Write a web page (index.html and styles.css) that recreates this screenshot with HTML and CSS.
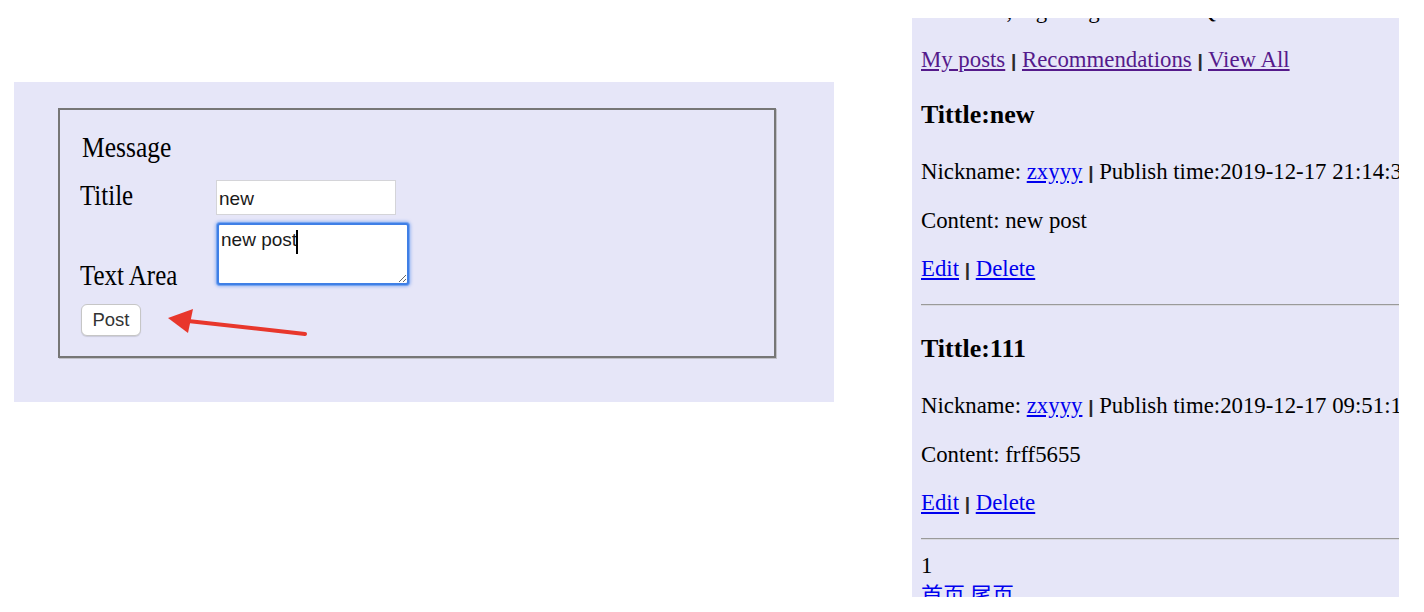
FILE: index.html
```html
<!DOCTYPE html>
<html>
<head>
<meta charset="utf-8">
<title>Blog</title>
<link rel="stylesheet" href="styles.css">
</head>
<body>
<div class="page">
  <section class="left-panel">
    <form class="msg-box">
      <div class="msg-title"><span class="squeeze-a">Message</span></div>
      <div class="row row-title">
        <label class="lbl lbl-title"><span class="squeeze-b">Titile</span></label>
        <input class="txt" type="text" value="new">
      </div>
      <div class="row row-area">
        <label class="lbl lbl-area"><span class="squeeze-b">Text Area</span></label>
        <div class="area-wrap">
          <textarea class="area">new post</textarea>
          <span class="caret"></span>
        </div>
      </div>
      <div class="row row-btn">
        <button type="button" class="post-btn">Post</button>
      </div>
    </form>
    <svg class="arrow" width="820" height="320" viewBox="0 0 820 320">
      <line x1="174" y1="239" x2="291" y2="252" stroke="#e8372c" stroke-width="4" stroke-linecap="round"/>
      <polygon points="154,236 179,227 174,251" fill="#e8372c"/>
    </svg>
  </section>

  <section class="right-panel">
    <div class="cutline">Welcome, big thing here now. Questions are not reviewed till the end.</div>
    <div class="nav"><a class="visited" href="#">My posts</a> <span class="sep">|</span> <a class="visited" href="#">Recommendations</a> <span class="sep">|</span> <a class="visited" href="#">View All</a></div>

    <h3 class="post-title">Tittle:new</h3>
    <div class="meta">Nickname: <a href="#">zxyyy</a> <span class="sep">|</span> Publish time:2019-12-17 21:14:37</div>
    <div class="content">Content: new post</div>
    <div class="actions"><a href="#">Edit</a> <span class="sep">|</span> <a href="#">Delete</a></div>
    <hr class="rule">

    <h3 class="post-title">Tittle:111</h3>
    <div class="meta">Nickname: <a href="#">zxyyy</a> <span class="sep">|</span> Publish time:2019-12-17 09:51:12</div>
    <div class="content">Content: frff5655</div>
    <div class="actions"><a href="#">Edit</a> <span class="sep">|</span> <a href="#">Delete</a></div>
    <hr class="rule">

    <div class="pagenum">1</div>
    <div class="pager"><a href="#">首页</a> <a href="#">尾页</a></div>
  </section>
</div>
</body>
</html>
```

FILE: styles.css
```css
html, body {
  margin: 0;
  padding: 0;
  background: #ffffff;
}
body {
  width: 1424px;
  height: 612px;
  overflow: hidden;
  font-family: "Liberation Serif", "Times New Roman", serif;
  color: #000;
}
.page {
  display: flex;
  align-items: flex-start;
}

/* ---------- left panel ---------- */
.left-panel {
  position: relative;
  box-sizing: border-box;
  width: 820px;
  height: 320px;
  margin-left: 14px;
  margin-top: 82px;
  padding: 26px 0 0 44px;
  background: #e6e6f8;
}
.msg-box {
  box-sizing: border-box;
  width: 718px;
  height: 250px;
  margin: 0;
  border: 2px solid #767676;
  box-shadow: 1px 1px 0 #c0c0c8;
  padding: 0 0 0 20px;
  display: flex;
  flex-direction: column;
  align-items: flex-start;
}
.msg-title {
  margin-top: 22px;
  margin-left: 2px;
  height: 30px;
  line-height: 30px;
  font-size: 29px;
  white-space: nowrap;
}
.squeeze-a {
  display: inline-block;
  transform: scaleX(0.88);
  transform-origin: left center;
}
.squeeze-b {
  display: inline-block;
  transform: scaleX(0.86);
  transform-origin: left center;
}
.row {
  display: flex;
}
.row-title {
  margin-top: 18px;
  align-items: center;
}
.row-area {
  margin-top: 7px;
  align-items: flex-end;
}
.row-btn {
  margin-top: 18px;
}
.lbl {
  width: 136px;
  height: 30px;
  line-height: 30px;
  font-size: 29px;
  white-space: nowrap;
}
.lbl-title {
  margin-bottom: 5px;
}
.lbl-area {
  margin-bottom: -4px;
}
.txt {
  box-sizing: border-box;
  width: 180px;
  height: 35px;
  margin: 0;
  border: 1px solid #d4d4d8;
  background: #fff;
  padding: 2px 2px 0 2px;
  font-family: "Liberation Sans", Arial, sans-serif;
  font-size: 19px;
  color: #1a1a1a;
  outline: none;
}
.area-wrap {
  position: relative;
  padding: 1px;
}
.area {
  display: block;
  box-sizing: border-box;
  width: 192px;
  height: 62px;
  margin: 0;
  border: 2px solid #3f7fe6;
  border-radius: 3px;
  box-shadow: 0 0 0 1px #77a5f0, 0 0 3px 2px rgba(110, 155, 240, 0.55);
  background: #fff;
  padding: 4px 2px 0 2px;
  font-family: "Liberation Sans", Arial, sans-serif;
  font-size: 19px;
  line-height: 22px;
  color: #1a1a1a;
  resize: both;
  outline: none;
}
.caret {
  position: absolute;
  left: 80px;
  top: 8px;
  width: 2px;
  height: 24px;
  background: #000;
}
.post-btn {
  box-sizing: border-box;
  width: 60px;
  height: 32px;
  margin-left: 1px;
  border: 1px solid #c6c6c6;
  border-radius: 6px;
  background: #fff;
  box-shadow: 0 1px 1px rgba(0, 0, 0, 0.12);
  font-family: "Liberation Sans", Arial, sans-serif;
  font-size: 18.5px;
  color: #333;
  padding: 0;
}
.arrow {
  position: absolute;
  left: 0;
  top: 0;
  pointer-events: none;
}

/* ---------- right panel ---------- */
.right-panel {
  box-sizing: border-box;
  width: 487px;
  height: 579px;
  margin-left: 78px;
  margin-top: 18px;
  padding-left: 9px;
  background: #e6e6f8;
  overflow: hidden;
  display: flex;
  flex-direction: column;
  font-size: 22.8px;
  line-height: 26px;
  white-space: nowrap;
}
.right-panel a {
  color: #0000ee;
  text-decoration: underline;
}
.right-panel a.visited {
  color: #551a8b;
}
.sep {
  color: #2a2a2a;
  font-family: "Liberation Sans", Arial, sans-serif;
  font-size: 19px;
  font-weight: bold;
}
.cutline {
  height: 26px;
  margin-top: -20px;
  flex-shrink: 0;
}
.nav {
  margin-top: 23px;
}
.post-title {
  margin: 28px 0 0 0;
  font-size: 26px;
  line-height: 26px;
  font-weight: bold;
}
.meta {
  margin-top: 31px;
}
.content {
  margin-top: 22px;
}
.actions {
  margin-top: 22px;
}
.rule {
  width: 100%;
  box-sizing: border-box;
  margin: 21px 0 2px 0;
  border: 0;
  border-top: 1px solid #9a9a9a;
  border-bottom: 1px solid #d8d8e0;
  height: 0;
  flex-shrink: 0;
}
.post-title + .meta {
  margin-top: 31px;
}
.pagenum {
  margin-top: 11px;
}
.pager {
  margin-top: 1px;
  font-family: "Noto Sans CJK SC", "Liberation Serif", sans-serif;
  font-size: 22px;
}
```
